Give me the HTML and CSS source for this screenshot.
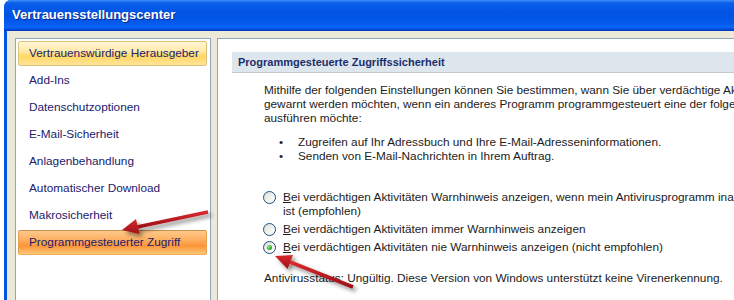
FILE: index.html
```html
<!DOCTYPE html>
<html lang="de">
<head>
  <meta charset="UTF-8">
  <title>Vertrauensstellungscenter</title>
  <link rel="stylesheet" href="styles.css">
</head>
<body>
  <div class="window">
    <div class="titlebar">Vertrauensstellungscenter</div>
    <div class="frame">
      <ul class="nav">
        <li class="nav-item hover">Vertrauenswürdige Herausgeber</li>
        <li class="nav-item">Add-Ins</li>
        <li class="nav-item">Datenschutzoptionen</li>
        <li class="nav-item">E-Mail-Sicherheit</li>
        <li class="nav-item">Anlagenbehandlung</li>
        <li class="nav-item">Automatischer Download</li>
        <li class="nav-item">Makrosicherheit</li>
        <li class="nav-item selected">Programmgesteuerter Zugriff</li>
      </ul>

      <div class="content">
        <div class="section-head">Programmgesteuerte Zugriffssicherheit</div>
        <div class="section-body">
          <p class="intro">Mithilfe der folgenden Einstellungen können Sie bestimmen, wann Sie über verdächtige Aktivitäten<br>gewarnt werden möchten, wenn ein anderes Programm programmgesteuert eine der folgenden Aktionen<br>ausführen möchte:</p>
          <ul class="actions">
            <li>Zugreifen auf Ihr Adressbuch und Ihre E-Mail-Adresseninformationen.</li>
            <li>Senden von E-Mail-Nachrichten in Ihrem Auftrag.</li>
          </ul>
          <div class="options">
            <label class="option">
              <span class="radio"></span>
              <span class="option-text"><u>B</u>ei verdächtigen Aktivitäten Warnhinweis anzeigen, wenn mein Antivirusprogramm inaktiv<br>ist (empfohlen)</span>
            </label>
            <label class="option">
              <span class="radio"></span>
              <span class="option-text"><u>B</u>ei verdächtigen Aktivitäten immer Warnhinweis anzeigen</span>
            </label>
            <label class="option">
              <span class="radio checked"></span>
              <span class="option-text"><u>B</u>ei verdächtigen Aktivitäten nie Warnhinweis anzeigen (nicht empfohlen)</span>
            </label>
          </div>
          <p class="status">Antivirusstatus: Ungültig. Diese Version von Windows unterstützt keine Virenerkennung.</p>
        </div>
      </div>
    </div>
  </div>

  <!-- red pointer arrows drawn over the dialog -->
  <svg class="arrows" width="734" height="300" viewBox="0 0 734 300">
    <defs>
      <filter id="shade" x="-20%" y="-40%" width="140%" height="180%">
        <feDropShadow dx="3" dy="3" stdDeviation="2" flood-color="#000" flood-opacity="0.45"/>
      </filter>
      <linearGradient id="red" x1="0" y1="0" x2="0" y2="1">
        <stop offset="0" stop-color="#d82a2f"/>
        <stop offset="1" stop-color="#9e1015"/>
      </linearGradient>
    </defs>
    <g filter="url(#shade)">
      <line x1="208" y1="212" x2="137" y2="227" stroke="url(#red)" stroke-width="3.5"/>
      <polygon points="122,230 139.5,234 136,219" fill="url(#red)"/>
    </g>
    <g filter="url(#shade)">
      <line x1="353" y1="287" x2="290" y2="262" stroke="url(#red)" stroke-width="3.5"/>
      <polygon points="275,256 293,255 287.5,269" fill="url(#red)"/>
    </g>
  </svg>
</body>
</html>
```

FILE: styles.css
```css
html,
body {
  margin: 0;
  height: 300px;
  overflow: hidden;
  background-color: #fff;
}

body {
  font-family: "Liberation Sans", Arial, sans-serif;
  font-size: 11.8px;
  color: #1c1c1c;
  position: relative;
}

.window {
  margin-left: 4px;
  width: 780px;
  height: 300px;
  display: flex;
  flex-direction: column;
  background-color: #0553e1;
  border-radius: 7px 0 0 0;
  overflow: hidden;
}

.titlebar {
  flex: none;
  height: 31px;
  line-height: 30px;
  padding-left: 8px;
  color: #fff;
  font-weight: bold;
  font-size: 13px;
  text-shadow: 1px 1px 0 #0b2a8c;
  background: linear-gradient(to bottom, #3d8ff7 0%, #0a5ee9 10%, #0053e3 45%, #0457e9 70%, #0a65f6 88%, #0048d8 95%, #0036b5 100%);
}

.frame {
  flex: 1;
  display: flex;
  gap: 6px;
  margin-left: 3px;
  padding: 7px 0 0 8px;
  background-color: #ece9d8;
}

/* left navigation */
.nav {
  flex: none;
  width: 189px;
  margin: 0;
  padding: 2px 3px 0 2px;
  list-style: none;
  background-color: #fff;
  border: 1px solid #8fa6c2;
  border-bottom: none;
}

.nav-item {
  box-sizing: border-box;
  height: 25px;
  line-height: 23px;
  margin-bottom: 2px;
  padding-left: 10px;
  color: #22206e;
  border: 1px solid transparent;
  border-radius: 2px;
  white-space: nowrap;
}

.nav-item.hover {
  border-color: #dcc278;
  background: linear-gradient(to bottom, #fff6d8 0%, #ffeaa8 40%, #ffd762 62%, #ffe49a 100%);
}

.nav-item.selected {
  border-color: #c4924c #e9a04c #f5ad5a;
  background: linear-gradient(to bottom, #ffc98c 0%, #fdb264 35%, #fb9438 65%, #ffc877 100%);
}

/* right content */
.content {
  flex: 1;
  min-width: 0;
  padding: 13px 0 0 14px;
  background-color: #fff;
  border: 1px solid #8fa6c2;
  border-right: none;
  border-bottom: none;
}

.section-head {
  height: 20px;
  line-height: 20px;
  padding-left: 6px;
  font-size: 11px;
  font-weight: bold;
  color: #1b2e6c;
  background-color: #dde6ed;
  border-bottom: 1px solid #c5c8cc;
}

.section-body {
  padding-left: 32px;
  line-height: 14px;
  white-space: nowrap;
}

.intro {
  margin: 10px 0 0;
}

.actions {
  margin: 10px 0 0;
  padding: 0;
  list-style: none;
}

.actions li {
  display: flex;
}

.actions li::before {
  content: "•";
  width: 19px;
  margin-left: 15px;
}

.options {
  margin-top: 27px;
  display: flex;
  flex-direction: column;
  gap: 4px;
}

.option {
  display: flex;
  align-items: flex-start;
  gap: 7px;
  margin-left: -1px;
}

.option u {
  text-decoration-thickness: 1px;
  text-underline-offset: 1px;
}

.radio {
  flex: none;
  box-sizing: border-box;
  width: 13px;
  height: 13px;
  margin-top: 1px;
  border: 1px solid #1c5180;
  border-radius: 50%;
  background: linear-gradient(135deg, #dcdcd6 0%, #f2f2ee 55%, #fff 100%);
  display: flex;
  align-items: center;
  justify-content: center;
}

.radio.checked::after {
  content: "";
  width: 5px;
  height: 5px;
  border-radius: 50%;
  background: radial-gradient(circle at 35% 35%, #8fe58f 0%, #2fae2f 60%, #1d8a1d 100%);
}

.status {
  margin: 17px 0 0;
}

.arrows {
  position: absolute;
  left: 0;
  top: 0;
  pointer-events: none;
}
```
